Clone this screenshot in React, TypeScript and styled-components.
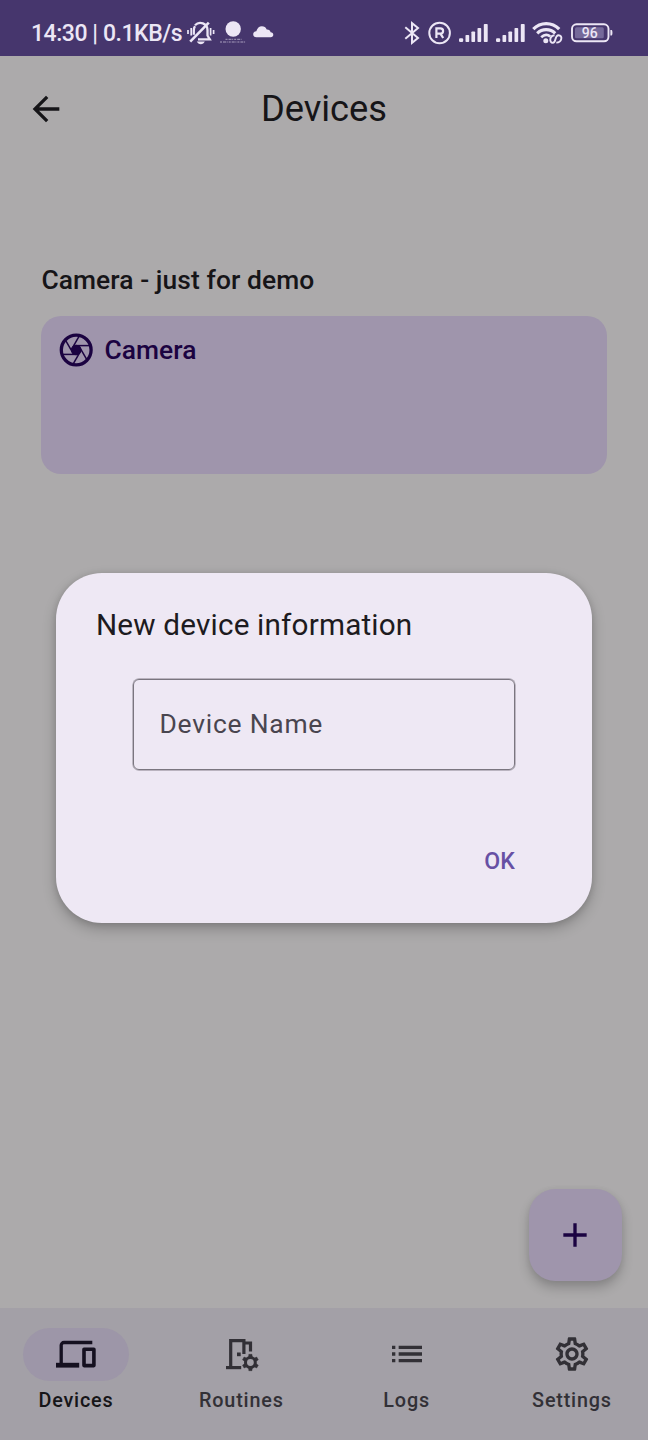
import React from 'react';
import styled, { createGlobalStyle, css } from 'styled-components';
import { MdArrowBack, MdList, MdOutlineSettings, MdAdd } from 'react-icons/md';

const GlobalStyle = createGlobalStyle`
  * { box-sizing: border-box; }
  body { margin: 0; background: #acaaab; font-family: Roboto, sans-serif; }
  button { font-family: inherit; border: 0; padding: 0; background: none; }
`;

const Screen = styled.div`
  position: relative;
  width: 648px;
  height: 1440px;
  display: flex;
  flex-direction: column;
  background: #acaaab;
  color: #161518;
  overflow: hidden;
`;

const StatusBar = styled.header`
  height: 56px;
  flex: none;
  display: flex;
  justify-content: space-between;
  align-items: center;
  padding: 9px 35px 0 31px;
  background: #46366d;
  color: #ece6f5;
`;

const StatusGroup = styled.div<{ $gap: number }>`
  display: flex;
  align-items: center;
  gap: ${(p) => p.$gap}px;
  svg { display: block; flex: none; }
`;

const Clock = styled.span`
  width: 151px;
  padding-top: 2px;
  font-size: 23px;
  line-height: 28px;
  font-weight: 500;
  letter-spacing: -0.45px;
  white-space: nowrap;
`;

const TopBar = styled.div`
  height: 106px;
  flex: none;
  display: grid;
  grid-template-columns: 92px 1fr 92px;
  align-items: center;
`;

const IconButton = styled.button`
  display: flex;
  justify-content: center;
  color: #161518;
`;

const Title = styled.h1`
  margin: 0;
  text-align: center;
  font-size: 36.3px;
  line-height: 46px;
  font-weight: 400;
`;

const Content = styled.main`
  flex: 1;
  padding: 101px 41.4px 0;
`;

const SectionTitle = styled.h2`
  margin: 0;
  font-size: 26.4px;
  line-height: 34px;
  font-weight: 500;
  letter-spacing: 0.08px;
`;

const DeviceCard = styled.section`
  height: 158px;
  margin-top: 19px;
  padding: 14px 14px;
  border-radius: 20px;
  background: #9f95ac;
  color: #1b0341;
`;

const CardHeader = styled.div`
  display: flex;
  align-items: center;
  gap: 7px;
  height: 40px;
  font-size: 26.4px;
  font-weight: 500;
  letter-spacing: 0.08px;
`;

const NavBar = styled.nav`
  height: 132px;
  flex: none;
  display: grid;
  grid-template-columns: repeat(4, 151px);
  justify-content: space-between;
  padding: 20px 0.5px 0;
  background: #a3a0a7;
`;

const NavItem = styled.button<{ $active?: boolean }>`
  display: flex;
  flex-direction: column;
  align-items: center;
  color: ${(p) => (p.$active ? '#161518' : '#323036')};
`;

const NavPill = styled.span<{ $active?: boolean }>`
  width: 106px;
  height: 53px;
  display: flex;
  align-items: flex-start;
  justify-content: center;
  padding-top: 6px;
  border-radius: 27px;
  ${(p) => p.$active && css`background: #9d96a8; color: #151020;`}
`;

const NavLabel = styled.span`
  margin-top: 7px;
  font-size: 19.8px;
  line-height: 26px;
  font-weight: 500;
  letter-spacing: 0.82px;
`;

const Fab = styled.button`
  position: absolute;
  right: 26.4px;
  bottom: 158.7px;
  width: 92.4px;
  height: 92.4px;
  display: flex;
  align-items: center;
  justify-content: center;
  border-radius: 26.4px;
  background: #9f95ac;
  color: #1b0341;
  box-shadow: 0 7px 12px rgba(0, 0, 0, 0.2), 0 1px 6px rgba(0, 0, 0, 0.06);
  svg { margin-right: 1px; }
`;

const Dialog = styled.div`
  position: absolute;
  left: 56.4px;
  top: 573px;
  width: 535.2px;
  height: 350px;
  padding: 33px 76.6px 0 39.6px;
  border-radius: 46px;
  background: #eee8f4;
  box-shadow: 0 6px 14px rgba(0, 0, 0, 0.22), 0 1px 6px rgba(0, 0, 0, 0.12);
`;

const DialogTitle = styled.h2`
  margin: 0;
  font-size: 29.7px;
  line-height: 38px;
  font-weight: 400;
  letter-spacing: 0.18px;
  color: #1d1b20;
`;

const TextField = styled.div`
  width: 382px;
  height: 91px;
  margin: 35px 0 0 37px;
  padding: 0 25.5px 1px;
  display: flex;
  align-items: center;
  border: 1px solid #7a757f;
  border-radius: 6px;
  box-shadow: 0 0 0 0.7px rgba(122, 117, 127, 0.6);
  color: #49454f;
  font-size: 26.4px;
  letter-spacing: 0.78px;
`;

const DialogActions = styled.div`
  display: flex;
  justify-content: flex-end;
  margin-top: 77px;
`;

const TextButton = styled.button`
  font-size: 23.1px;
  line-height: 30px;
  font-weight: 500;
  letter-spacing: 0.1px;
  color: #6750a4;
`;

const MutedBell = () => (
  <svg width="28" height="24" viewBox="0 0 28 24" fill="none" stroke="currentColor" strokeWidth="2.3">
    <path d="M8 4.200C12.500-.4 20.500 2.500 20.500 9v5.500l2.300 3.800H11M6.800 13.800V9.500c0-1.500.3-3 1.200-4.300" />
    <path d="M3.200 20.600 21.800 1.600" strokeWidth="2.600" />
    <path d="M1 9v4M4.200 7v7.600M23.600 7v7.600M26.600 9v4" strokeWidth="1.700" />
    <path d="M9.800 20.600h8c-1.300 3.400-6.700 3.400-8 0z" fill="currentColor" stroke="none" />
  </svg>
);

const DotBadge = () => (
  <svg width="27" height="24" viewBox="0 0 27 24" fill="currentColor">
    <circle cx="13.200" cy="8" r="7.700" />
    <path d="M5.500 18.300h16M0 21h26" stroke="currentColor" strokeWidth="1" strokeDasharray="2 1 3 .7 1 1" opacity=".6" />
  </svg>
);

const Cloud = () => (
  <svg width="22" height="24" viewBox="0 0 22 24" fill="currentColor">
    <path d="M4.400 16.300C2.300 16.300 1.200 15.200 1.200 13.300c0-1.900 1.400-2.900 3.100-3C5.200 7 7.200 5.200 9.900 5.200c2.300 0 4 1.200 4.800 3.200 2.300-.1 3.700 1.100 3.900 2.900 1.800.2 2.700 1.200 2.700 2.500 0 1.600-1 2.500-2.600 2.500z" />
  </svg>
);

const Bluetooth = () => (
  <svg width="16" height="24" viewBox="0 0 16 24" fill="none" stroke="currentColor" strokeWidth="2">
    <path d="M1.300 6.300 14 17 8 21.800V2.200L14 7 1.300 17.700" />
  </svg>
);

const Registered = () => (
  <svg width="24" height="24" viewBox="0 0 24 24" fill="none" stroke="currentColor" strokeWidth="2">
    <circle cx="12.600" cy="12" r="10.300" />
    <path d="M9.400 17V7.400h4c3.600 0 3.600 5.200 0 5.200h-4M13.400 12.600l2.800 4.400" strokeWidth="2.200" />
  </svg>
);

const Signal = () => (
  <svg width="30" height="20" viewBox="0 0 30 20" fill="currentColor">
    <rect x="1" y="15.200" width="4.200" height="3.800" rx="1.200" />
    <rect x="7.500" y="12" width="3.700" height="7" rx=".8" />
    <rect x="13.400" y="8.500" width="3.700" height="10.500" rx=".8" />
    <rect x="19.500" y="5" width="3.700" height="14" rx=".8" />
    <rect x="25.800" y="1" width="3.900" height="18" rx=".8" />
  </svg>
);

const Wifi = () => (
  <svg width="31" height="24" viewBox="0 0 31 24" fill="none" stroke="currentColor">
    <path d="M1.300 8.200C8.500.8 20 .8 27.200 8.200" strokeWidth="3.300" />
    <path d="M5.200 12.400c5-5 13-5 18 0" strokeWidth="3.100" />
    <path d="M9.200 16.200c3-2.800 6.500-2.800 9-.8" strokeWidth="2.700" />
    <circle cx="13.800" cy="19.800" r="2.500" fill="currentColor" stroke="none" />
    <path d="M22.500 14.200c-5 .4-5.600 7.600-1.600 7.600 3.400 0 1.600-7.600 5.600-7.600 4.600 0 3.600 7.400-2.200 7.400" strokeWidth="1.900" />
  </svg>
);

const Battery = () => (
  <svg width="43" height="20" viewBox="0 0 43 20">
    <rect x="2" y="1.300" width="36.500" height="17" rx="4.500" fill="none" stroke="currentColor" strokeWidth="1.900" />
    <rect x="5" y="4.300" width="28.800" height="11" rx="1.500" fill="#75699a" />
    <path d="M40.400 7h1.200c1.100 0 1.100 5.500 0 5.500h-1.200z" fill="currentColor" />
    <text x="19.800" y="14.900" textAnchor="middle" fontFamily="Roboto, sans-serif" fontWeight="500" fontSize="14" fill="currentColor">96</text>
  </svg>
);

const Aperture = () => (
  <svg width="42" height="42" viewBox="0 0 42 42" fill="none" stroke="currentColor">
    <circle cx="21.200" cy="21" r="14.900" strokeWidth="3.300" />
    <circle cx="21.200" cy="21" r="5.200" fill="currentColor" stroke="none" />
    {[0, 60, 120, 180, 240, 300].map((angle) => (
      <path key={angle} d="M19.500 16.600h15" strokeWidth="1.500" transform={`rotate(${angle} 21.200 21)`} />
    ))}
  </svg>
);

const DevicesIcon = () => (
  <svg width="40" height="40" viewBox="0 0 40 40" fill="none" stroke="currentColor">
    <path d="M36.300 8.500H8c-1.600 0-2.800 1.200-2.800 2.800V30" strokeWidth="3.300" />
    <path d="M0 31.200h23.200" strokeWidth="4.800" />
    <path d="M28 15.200h9.900v16.400H28z" strokeWidth="3.600" strokeLinejoin="round" />
  </svg>
);

const DoorGear = () => (
  <svg width="40" height="40" viewBox="0 0 40 40" fill="none" stroke="currentColor">
    <path d="M5 33.600h15.200" strokeWidth="3.200" />
    <path d="M9.700 34V6.700h13.200V20M24.500 9h5v8.500" strokeWidth="3.200" />
    <rect x="16" y="18.500" width="3.700" height="3.700" fill="currentColor" stroke="none" />
    <circle cx="29.400" cy="28.500" r="4.900" strokeWidth="3" />
    {[0, 60, 120, 180, 240, 300].map((angle) => (
      <path key={angle} d="M27.500 23.500l.3-3.200h3.200l.3 3.200z" fill="currentColor" strokeWidth=".4" transform={`rotate(${angle} 29.400 28.500)`} />
    ))}
  </svg>
);

const navItems = [
  { label: 'Devices', icon: <DevicesIcon />, active: true },
  { label: 'Routines', icon: <DoorGear /> },
  { label: 'Logs', icon: <MdList size={40} /> },
  { label: 'Settings', icon: <MdOutlineSettings size={40} /> },
];

export default function App() {
  return (
    <Screen>
      <GlobalStyle />
      <StatusBar>
        <StatusGroup $gap={5}>
          <Clock>14:30 | 0.1KB/s</Clock>
          <MutedBell />
          <DotBadge />
          <Cloud />
        </StatusGroup>
        <StatusGroup $gap={7}>
          <Bluetooth />
          <Registered />
          <Signal />
          <Signal />
          <Wifi />
          <Battery />
        </StatusGroup>
      </StatusBar>
      <TopBar>
        <IconButton aria-label="Back"><MdArrowBack size={40} /></IconButton>
        <Title>Devices</Title>
      </TopBar>
      <Content>
        <SectionTitle>Camera - just for demo</SectionTitle>
        <DeviceCard>
          <CardHeader><Aperture />Camera</CardHeader>
        </DeviceCard>
      </Content>
      <NavBar>
        {navItems.map((item) => (
          <NavItem key={item.label} $active={item.active}>
            <NavPill $active={item.active}>{item.icon}</NavPill>
            <NavLabel>{item.label}</NavLabel>
          </NavItem>
        ))}
      </NavBar>
      <Fab aria-label="Add device"><MdAdd size={40} /></Fab>
      <Dialog role="dialog">
        <DialogTitle>New device information</DialogTitle>
        <TextField>Device Name</TextField>
        <DialogActions><TextButton>OK</TextButton></DialogActions>
      </Dialog>
    </Screen>
  );
}
